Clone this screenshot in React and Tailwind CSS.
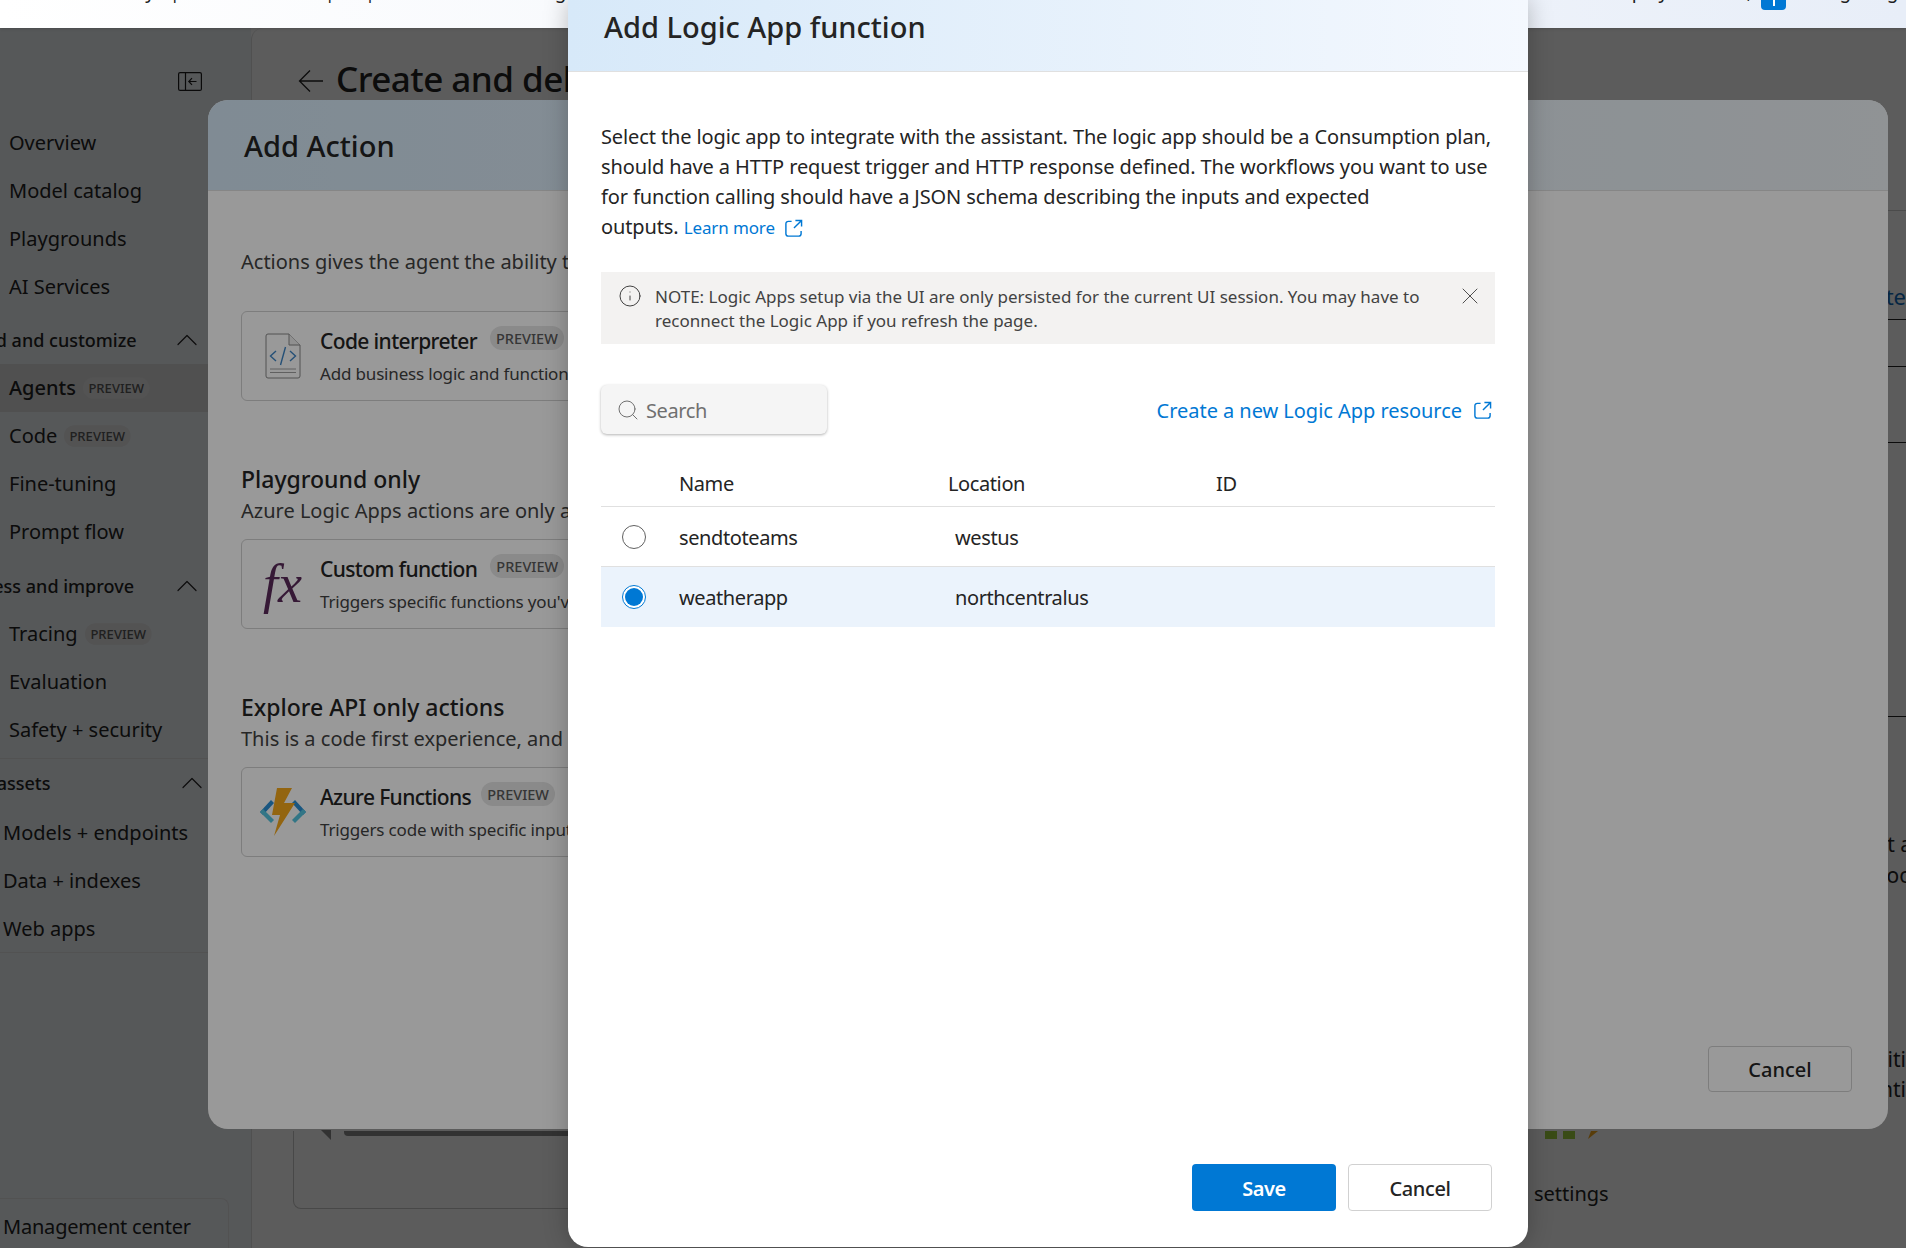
import { ChevronUp, Info, Search, X } from 'lucide-react';

const ExternalIcon = ({ className }) => (
    <svg viewBox="0 0 20 20" fill="none" stroke="currentColor" strokeWidth="1.5" className={className}>
        <path d="M8 2.5H4.5a2.5 2.5 0 0 0-2.5 2.5v10.5a2.5 2.5 0 0 0 2.5 2.5h11a2.5 2.5 0 0 0 2.5-2.5V12.5" />
        <path d="M12 1.5h6.5V8M18.2 1.8L10.5 9.5" />
    </svg>
);

const CollapseIcon = () => (
    <svg width="24" height="19" viewBox="0 0 24 19" fill="none" stroke="#1f1f1f" strokeWidth="1.2">
        <rect x="0.6" y="0.6" width="22.8" height="17.8" rx="1.5" />
        <path d="M7.5 0.6v17.8M18.5 9.5h-7.5M14 6.2L10.8 9.5L14 12.8" />
    </svg>
);

const CodeFileIcon = () => (
    <svg width="36" height="46" viewBox="0 0 36 46" fill="none">
        <path d="M1 3a2 2 0 0 1 2-2h21l11 11v31a2 2 0 0 1-2 2H3a2 2 0 0 1-2-2z" fill="#fff" stroke="#8a8a8a" />
        <path d="M24 1v11h11" fill="#f0f0f0" stroke="#8a8a8a" />
        <path d="M11 18l-5.500 5 5.500 5M25 18l5.500 5-5.500 5M20.500 14l-5 18" stroke="#3f86c6" strokeWidth="1.400" />
        <path d="M5 36h26M5 39.500h26" stroke="#a0a0a0" />
    </svg>
);

const FunctionsIcon = () => (
    <svg width="48" height="50" viewBox="0 0 48 50">
        <path d="M12 13L1 25l3 3 11-12z" fill="#2b8fd6" />
        <path d="M1 25l11 11 3-3-8-8-3-3z" fill="#55c5e0" />
        <path d="M36 13l11 12-3 3-11-12z" fill="#2b8fd6" />
        <path d="M47 25L36 36l-3-3 8-8 3-3z" fill="#55c5e0" />
        <path d="M18 1h15l-8 15h11L15 49l6-21H13z" fill="#f5a81c" />
    </svg>
);

const Preview = ({ className = '' }) => (
    <span className={`rounded-full bg-[#e6e6e6] px-[6px] py-[2px] text-[14.500px] leading-[20px] font-medium text-[#5a5a5a] ${className}`}>
        PREVIEW
    </span>
);

const NavItem = ({ label, preview, active, indent = 'pl-[9px]' }) => (
    <div className={`flex h-[48px] items-center gap-[7px] ${indent} text-[20px] ${active ? 'bg-[#e0e0e0] font-medium' : ''}`}>
        <span>{label}</span>
        {preview && <Preview className="origin-left scale-90" />}
    </div>
);

const NavHeading = ({ label, shift, chevron = 'mr-[46px]' }) => (
    <div className="flex h-[48px] items-center justify-between overflow-hidden text-[18px] font-medium">
        <span className={`whitespace-nowrap ${shift}`}>{label}</span>
        <ChevronUp size={36} strokeWidth={0.8} className={`-my-[2px] shrink-0 ${chevron}`} />
    </div>
);

const Sidebar = () => (
    <aside className="flex h-full w-[251px] shrink-0 flex-col bg-[#f0f5f9] text-[#242424]">
        <div className="flex h-[91px] shrink-0 items-start justify-end pt-[44px] pr-[49px]">
            <CollapseIcon />
        </div>
        <NavItem label="Overview" />
        <NavItem label="Model catalog" />
        <NavItem label="Playgrounds" />
        <NavItem label="AI Services" />
        <div className="h-[5px]" />
        <NavHeading label="Build and customize" shift="-ml-[37px]" />
        <NavItem label="Agents" preview active />
        <NavItem label="Code" preview />
        <NavItem label="Fine-tuning" />
        <NavItem label="Prompt flow" />
        <div className="h-[6px]" />
        <NavHeading label="Assess and improve" shift="-ml-[36px]" />
        <NavItem label="Tracing" preview />
        <NavItem label="Evaluation" />
        <NavItem label="Safety + security" />
        <div className="h-[5px] border-b border-[#e4e4e4]" />
        <NavHeading label="My assets" shift="-ml-[34px]" chevron="mr-[41px]" />
        <div className="h-[2px]" />
        <NavItem label="Models + endpoints" indent="pl-[3px]" />
        <NavItem label="Data + indexes" indent="pl-[3px]" />
        <NavItem label="Web apps" indent="pl-[3px]" />
        <div className="-mt-[1px] border-t border-[#e4e4e4]" />
        <div className="flex-1" />
        <div className="mr-[22px] flex h-[50px] items-center rounded-tr-lg border-t border-r border-[#e4e4e4] pt-[6px] pl-[3px] text-[20px] tracking-[-0.01em]">
            Management center
        </div>
    </aside>
);

const MainPage = () => (
    <main className="flex h-full min-w-0 flex-1 flex-col rounded-tl-xl border-l border-[#e0e0e0] bg-white text-[#242424]">
        <div className="flex h-[76px] shrink-0 items-end gap-[12px] pl-[46px] whitespace-nowrap">
            <svg width="26" height="26" viewBox="0 0 26 26" fill="none" stroke="#242424" strokeWidth="1.3" className="mb-[10px]">
                <path d="M25 13H2M12 2.500L1.500 13L12 23.500" />
            </svg>
            <h1 className="text-[35px] leading-[50px] font-medium tracking-[-0.015em]">Create and debug your agents</h1>
        </div>
        <div className="flex flex-1 justify-end overflow-hidden">
            <div className="mt-[106px] w-[300px] shrink-0">
                <div className="flex h-[109px] items-end justify-end overflow-hidden border-t border-[#d0d0d0] pb-[6px] text-[22px] text-[#0f6cbd]">
                    Activate
                </div>
                <div className="h-[47px] border-t border-[#242424]" />
                <div className="h-[76px] border-t border-[#242424]" />
                <div className="h-[274px] border-t border-[#242424]" />
                <div className="-mr-[6px] border-t border-[#242424] pt-[112px] text-right text-[21px] leading-[31px]">
                    <p className="whitespace-nowrap">Content a</p>
                    <p className="whitespace-nowrap">Support poo</p>
                </div>
                <div className="mt-[153px] text-right text-[21px] leading-[30px]">
                    <p className="whitespace-nowrap">Capabiliti</p>
                    <p className="whitespace-nowrap">Continenti</p>
                </div>
            </div>
        </div>
        <div className="flex h-[117px] shrink-0 pl-[41px]">
            <div className="mb-[39px] flex w-[1208px] shrink-0 rounded-b-lg border-x border-b border-[#c8c8c8]">
                <svg width="10" height="10" viewBox="0 0 10 10" className="mt-[-1px] ml-[27px] shrink-0">
                    <path d="M0 0h10v10z" fill="#8c8c8c" />
                </svg>
                <div className="ml-[13px] h-[5px] flex-1 rounded-b bg-[#8c8c8c]" />
            </div>
            <div className="ml-[33px] flex flex-col">
                <div className="flex items-start gap-[6px] pl-[11px]">
                    <span className="h-[8px] w-[12px] bg-[#a0d040]" />
                    <span className="h-[8px] w-[12px] bg-[#a0d040]" />
                    <svg width="12" height="8" viewBox="0 0 12 8" className="ml-[5px]">
                        <path d="M5 0h7L2 8z" fill="#f5a81c" />
                    </svg>
                </div>
                <span className="mt-[40px] text-[20px]">settings</span>
            </div>
        </div>
    </main>
);

const ActionCard = ({ icon, title, description, badge = 'ml-[13px]' }) => (
    <div className="mt-[13px] flex h-[90px] w-[1000px] items-center rounded-md border border-[#d1d1d1]">
        <div className="flex w-[78px] shrink-0 justify-center pl-[3px]">{icon}</div>
        <div className="pt-[2px]">
            <div className="flex items-center">
                <span className="text-[21px] leading-[32px] font-medium tracking-[-0.03em]">{title}</span>
                <Preview className={`-mt-[6px] ${badge}`} />
            </div>
            <p className="mt-[2px] text-[17px] leading-[30px] tracking-[-0.01em] text-[#424242]">{description}</p>
        </div>
    </div>
);

const AddActionDialog = () => (
    <div className="absolute top-[100px] left-[208px] z-20 flex h-[1029px] w-[1680px] flex-col overflow-hidden rounded-[20px] bg-white text-[#242424]">
        <div className="flex h-[91px] shrink-0 items-center border-b border-[#e0e0e0] bg-gradient-to-r from-[#d5e8f7] to-[#f0f5f9] pt-[2px] pl-[36px]">
            <h2 className="text-[29px] font-medium">Add Action</h2>
        </div>
        <div className="flex-1 pl-[33px]">
            <p className="mt-[56px] mb-[34px] text-[20px] leading-[30px] text-[#424242]">
                Actions gives the agent the ability to perform tasks
            </p>
            <ActionCard
                icon={<CodeFileIcon />}
                title="Code interpreter"
                description="Add business logic and functions to your agent"
            />
            <h3 className="mt-[62px] text-[23px] leading-[32px] font-medium">Playground only</h3>
            <p className="mt-[1px] text-[20px] leading-[30px] text-[#424242]">Azure Logic Apps actions are only available here</p>
            <ActionCard
                icon={<span className="font-['Liberation_Serif',serif] text-[54px] leading-none text-[#5a2a5a] italic">fx</span>}
                title="Custom function"
                description="Triggers specific functions you've defined"
            />
            <h3 className="mt-[62px] text-[23px] leading-[32px] font-medium">Explore API only actions</h3>
            <p className="mt-[1px] text-[20px] leading-[30px] text-[#424242]">This is a code first experience, and requires the API</p>
            <ActionCard
                icon={<FunctionsIcon />}
                title="Azure Functions"
                description="Triggers code with specific inputs"
                badge="ml-[10px]"
            />
        </div>
        <div className="flex justify-end pr-[36px] pb-[37px]">
            <button className="h-[46px] w-[144px] rounded border border-[#d1d1d1] pt-[2px] text-[20px] font-medium">Cancel</button>
        </div>
    </div>
);

const Radio = ({ checked }) => (
    <span className={`flex h-[24px] w-[24px] items-center justify-center rounded-full border ${checked ? 'border-[#0078d4]' : 'border-[#616161]'} bg-white`}>
        {checked && <span className="h-[18px] w-[18px] rounded-full bg-[#0078d4]" />}
    </span>
);

const LogicRow = ({ name, location, checked }) => (
    <div className={`flex h-[60px] items-center text-[20px] tracking-[-0.02em] ${checked ? 'bg-[#ebf3fc]' : 'border-b border-[#e0e0e0]'}`}>
        <div className="flex w-[78px] shrink-0 pl-[21px]">
            <Radio checked={checked} />
        </div>
        <span className="w-[276px] shrink-0 pt-[2px]">{name}</span>
        <span className="pt-[2px]">{location}</span>
    </div>
);

const LogicAppDialog = () => (
    <div className="absolute top-0 left-[568px] z-40 flex h-[1247px] w-[960px] flex-col rounded-b-[20px] bg-white text-[#242424] shadow-[0_0_24px_rgba(0,0,0,0.25)]">
        <div className="flex h-[72px] shrink-0 items-start border-b border-[#e0e0e0] bg-gradient-to-r from-[#d7e9f9] to-[#f4f8fe] pl-[36px]">
            <h2 className="mt-[7px] text-[29px] leading-[40px] font-medium">Add Logic App function</h2>
        </div>
        <div className="flex flex-1 flex-col px-[33px] pt-[50px]">
            <p className="text-[20px] leading-[30px] tracking-[-0.006em] whitespace-nowrap">
                Select the logic app to integrate with the assistant. The logic app should be a Consumption plan,
                <br />
                should have a HTTP request trigger and HTTP response defined. The workflows you want to use
                <br />
                for function calling should have a JSON schema describing the inputs and expected
                <br />
                outputs.{' '}
                <a className="inline-flex items-center gap-[9px] text-[17px] text-[#0078d4]">
                    Learn more
                    <ExternalIcon className="h-[19px] w-[19px] text-[#0078d4]" />
                </a>
            </p>
            <div className="mt-[29px] flex h-[72px] items-start bg-[#f3f2f1] pt-[12px] pr-[11px] pl-[17px] text-[#424242]">
                <Info size={24} strokeWidth={1} className="shrink-0" />
                <p className="mt-[1px] ml-[13px] flex-1 text-[17px] leading-[24px] whitespace-nowrap">
                    NOTE: Logic Apps setup via the UI are only persisted for the current UI session. You may have to
                    <br />
                    reconnect the Logic App if you refresh the page.
                </p>
                <X size={28} strokeWidth={0.8} className="-mt-[2px] shrink-0" />
            </div>
            <div className="mt-[41px] flex items-center justify-between pr-[3px]">
                <div className="flex h-[49px] w-[226px] items-center rounded-md bg-[#f5f5f5] pl-[15px] text-[20px] tracking-[-0.02em] text-[#707070] shadow-[0_1px_3px_rgba(0,0,0,0.3)]">
                    <Search size={24} strokeWidth={1} />
                    <span className="ml-[6px] pt-[2px]">Search</span>
                </div>
                <a className="flex items-center gap-[11px] pt-[2px] text-[20px] tracking-[-0.002em] text-[#0078d4]">
                    Create a new Logic App resource
                    <ExternalIcon className="h-[19px] w-[19px] text-[#0078d4]" />
                </a>
            </div>
            <div className="mt-[28px] flex h-[45px] items-center border-b border-[#e0e0e0] pb-[1px] pl-[78px] text-[20px] tracking-[-0.02em]">
                <span className="w-[269px] shrink-0">Name</span>
                <span className="w-[268px] shrink-0">Location</span>
                <span>ID</span>
            </div>
            <LogicRow name="sendtoteams" location="westus" />
            <LogicRow name="weatherapp" location="northcentralus" checked />
            <div className="flex-1" />
            <div className="flex justify-end gap-[12px] pr-[3px] pb-[36px]">
                <button className="h-[47px] w-[144px] rounded bg-[#0078d4] pt-[2px] text-[20px] font-semibold tracking-[-0.02em] text-white">Save</button>
                <button className="h-[47px] w-[144px] rounded border border-[#d1d1d1] pt-[2px] text-[20px] font-medium tracking-[-0.02em]">Cancel</button>
            </div>
        </div>
    </div>
);

const TopBar = () => (
    <header className="relative z-30 flex h-[28px] shrink-0 items-start overflow-hidden bg-gradient-to-r from-white to-[#e8eef8] text-[#1f1f1f] shadow-sm">
        <div className="-mt-[21px] flex w-full items-center text-[19px] leading-[24px] tracking-[-0.02em] whitespace-nowrap">
            <span className="ml-[7px]">Azure AI Foundry</span>
            <span className="ml-[15px]">|</span>
            <span className="ml-[145px]">|</span>
            <span className="ml-[30px]">|</span>
            <span className="ml-[180px]">g</span>
            <span className="ml-[1042px]">Deploy</span>
            <span className="ml-[79px]">,</span>
            <span className="ml-[88px]">g</span>
            <span className="ml-[36px]">g</span>
        </div>
        <div className="absolute top-0 left-[1761px] flex h-[10px] w-[25px] justify-center rounded-b bg-[#0078d4]">
            <span className="h-[6px] w-[2px] bg-white" />
        </div>
    </header>
);

const App = () => {
    return (
        <div className="relative flex h-screen w-full flex-col overflow-hidden bg-white font-['Noto_Sans',sans-serif]">
            <TopBar />
            <div className="flex min-h-0 flex-1">
                <Sidebar />
                <MainPage />
            </div>
            <div className="absolute inset-0 z-10 bg-black/40" />
            <AddActionDialog />
            <div className="absolute inset-x-0 top-[28px] bottom-0 z-[25] bg-black/40" />
            <LogicAppDialog />
        </div>
    );
};

export default App;
